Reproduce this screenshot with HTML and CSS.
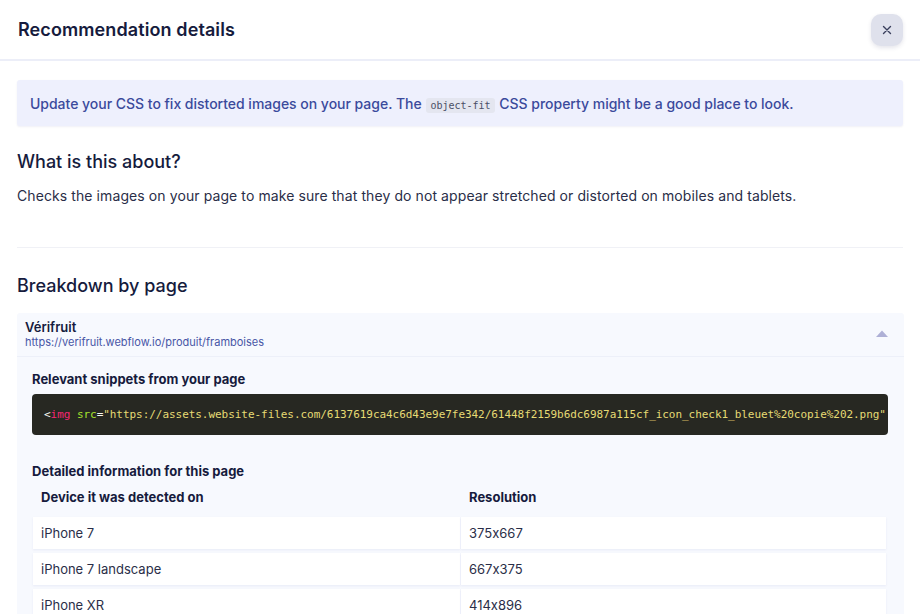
FILE: index.html
```html
<!DOCTYPE html>
<html lang="en">
<head>
<meta charset="utf-8">
<title>Recommendation details</title>
<link rel="stylesheet" href="styles.css">
</head>
<body>
<div class="modal">
  <header class="modal-header">
    <h1 class="modal-title">Recommendation details</h1>
    <button class="close-btn" aria-label="Close">
      <svg width="12" height="12" viewBox="0 0 12 12"><path d="M2.5 2.5 L9.5 9.5 M9.5 2.5 L2.5 9.5" stroke="#3a3f5c" stroke-width="1.4" stroke-linecap="round"/></svg>
    </button>
  </header>
  <main class="modal-body">
    <div class="alert"><span>Update your CSS to fix distorted images on your page. The <code class="inline-code">object-fit</code> CSS property might be a good place to look.</span></div>
    <h2 class="section-title first">What is this about?</h2>
    <p class="section-text">Checks the images on your page to make sure that they do not appear stretched or distorted on mobiles and tablets.</p>
    <hr class="divider">
    <h2 class="section-title second">Breakdown by page</h2>
    <section class="card">
      <div class="card-header">
        <div class="card-page">
          <div class="page-name">Vérifruit</div>
          <div class="page-url">https://verifruit.webflow.io/produit/framboises</div>
        </div>
        <svg class="caret" width="12" height="7" viewBox="0 0 12 7"><path d="M0 7 L6 0.5 L12 7 Z" fill="#aeb0d6"/></svg>
      </div>
      <div class="card-body">
        <h3 class="sub-title">Relevant snippets from your page</h3>
        <pre class="code"><code><span class="c-punct">&lt;</span><span class="c-tag">img</span> <span class="c-attr">src</span><span class="c-punct">=</span><span class="c-str">"https://assets.website-files.com/6137619ca4c6d43e9e7fe342/61448f2159b6dc6987a115cf_icon_check1_bleuet%20copie%202.png"</span></code></pre>
        <h3 class="sub-title detail">Detailed information for this page</h3>
        <div class="table">
          <div class="th">Device it was detected on</div>
          <div class="th">Resolution</div>
          <div class="td">iPhone 7</div>
          <div class="td">375x667</div>
          <div class="td">iPhone 7 landscape</div>
          <div class="td">667x375</div>
          <div class="td">iPhone XR</div>
          <div class="td">414x896</div>
        </div>
      </div>
    </section>
  </main>
</div>
</body>
</html>
```

FILE: styles.css
```css
* { box-sizing: border-box; }
html, body { margin: 0; padding: 0; background: #ffffff; }
body {
  font-family: "Inter", "Noto Sans", sans-serif;
  font-feature-settings: "calt" 0;
  color: #1c2141;
  overflow: hidden;
  height: 614px;
}
.modal { width: 920px; }
.modal-header {
  height: 61px;
  display: flex;
  align-items: center;
  justify-content: space-between;
  padding: 0 17px 0 18px;
  border-bottom: 2px solid #eceef8;
}
.modal-title {
  margin: 0;
  font-size: 18px;
  font-weight: 600;
  color: #161b3d;
  letter-spacing: 0.1px;
}
.close-btn {
  width: 32px;
  height: 32px;
  border: none;
  border-radius: 10px;
  background: #dfe1ec;
  box-shadow: 0 2px 4px rgba(40, 45, 90, 0.12);
  display: flex;
  align-items: center;
  justify-content: center;
  padding: 0;
}
.modal-body { padding: 19px 17px 0 17px; }
.alert {
  height: 46px;
  display: flex;
  align-items: center;
  padding: 0 13px;
  background: #eef0fd;
  border-radius: 3px;
  box-shadow: 0 1px 2px rgba(60, 70, 140, 0.08);
  color: #3b4a9c;
  font-size: 14px;
  font-weight: 500;
  letter-spacing: -0.02px;
  white-space: pre;
}
.inline-code {
  font-family: "DejaVu Sans Mono", monospace;
  font-size: 10px;
  letter-spacing: 0;
  color: #4a4f66;
  background: #e4e6f0;
  border-radius: 3px;
  padding: 2px 4px;
  margin: 0 1px;
}
.section-title {
  margin: 0;
  font-size: 18px;
  line-height: 24px;
  font-weight: 500;
  color: #161b3d;
}
.section-title.first { margin-top: 24px; }
.section-text {
  margin: 12px 0 0 0;
  font-size: 14px;
  line-height: 20px;
  letter-spacing: 0.09px;
  color: #2a2e48;
}
.divider {
  margin: 41px 0 0 0;
  border: none;
  border-top: 1px solid #f0f1f6;
  height: 0;
}
.section-title.second { margin-top: 26px; }
.card {
  margin-top: 15px;
  background: #f7f9fe;
  border-radius: 3px;
  margin-right: -1px;
}
.card-header {
  display: flex;
  align-items: center;
  justify-content: space-between;
  padding: 7px 16px 7px 8px;
  border-bottom: 1px solid #edf0f9;
}
.page-name {
  font-size: 13px;
  line-height: 15px;
  font-weight: 600;
  color: #161b3d;
}
.page-url {
  font-size: 11px;
  line-height: 14px;
  color: #4856a6;
}
.caret { margin-top: -2px; }
.card-body { padding: 13px 16px 0 15px; }
.sub-title {
  margin: 0;
  font-size: 13px;
  line-height: 18px;
  font-weight: 700;
  color: #161b3d;
}
.sub-title.detail { margin-top: 27px; }
.code {
  margin: 6px 0 0 0;
  height: 41px;
  padding: 0 2px 0 12px;
  background: #272822;
  border-radius: 4px;
  font-family: "Liberation Mono", "DejaVu Sans Mono", monospace;
  font-size: 11px;
  letter-spacing: -0.045px;
  line-height: 41px;
  white-space: pre;
  overflow: hidden;
}
.c-punct { color: #f8f8f2; }
.c-tag { color: #f92672; }
.c-attr { color: #a6e22e; }
.c-str { color: #e6db74; }
.table {
  margin-top: 1px;
  margin-left: 1px;
  display: grid;
  grid-template-columns: 427px 425px;
  column-gap: 1px;
  row-gap: 4px;
}
.th {
  height: 32px;
  display: flex;
  align-items: center;
  padding-left: 8px;
  font-size: 13px;
  font-weight: 700;
  color: #161b3d;
}
.td {
  height: 32px;
  display: flex;
  align-items: center;
  padding-left: 8px;
  background: #ffffff;
  box-shadow: 0 1px 2px rgba(60, 80, 160, 0.08);
  font-size: 13px;
  color: #2a2e48;
}
```
